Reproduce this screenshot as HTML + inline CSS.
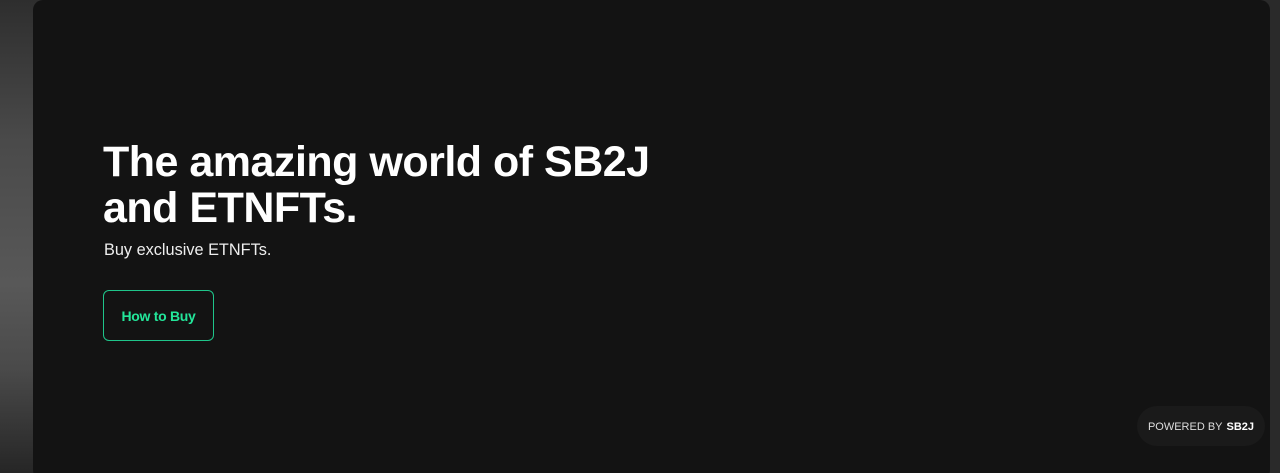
<!DOCTYPE html>
<html><head><style>
html,body{margin:0;padding:0;width:1280px;height:473px;overflow:hidden;font-family:"Liberation Sans",sans-serif}
body{background:linear-gradient(180deg,#2e2e2e 0%,#4a4a4a 30%,#585858 60%,#4a4a4a 78%,#262626 100%);position:relative}
.right{position:absolute;left:1260px;top:0;width:20px;height:473px;background:#2a2a2a}
.card{position:absolute;left:33px;top:0;width:1237px;height:480px;background:#131313;border-radius:10px}
h1{position:absolute;left:70px;top:139px;margin:0;color:#fff;font-size:43px;line-height:46px;font-weight:700;letter-spacing:-0.5px}
p{position:absolute;left:71px;top:241px;margin:0;color:#eee;font-size:16.3px}
.btn{position:absolute;left:70px;top:290px;border:1px solid #1fc58a;border-radius:6px;color:#23e69a;font-weight:700;font-size:14px;display:flex;align-items:center;justify-content:center;box-sizing:border-box;width:111px;height:51px;letter-spacing:-0.3px}
.pw{position:absolute;left:1104px;top:406px;width:128px;height:40px;border-radius:20px;background:#1a1a1a;color:#ddd;font-size:11px;display:flex;align-items:center;justify-content:center;padding-top:1px;box-sizing:border-box}
.pw b{color:#fff;margin-left:4px}
</style></head><body>
<div class="right"></div>
<div class="card">
<h1>The amazing world of SB2J<br>and ETNFTs.</h1>
<p>Buy exclusive ETNFTs.</p>
<div class="btn">How to Buy</div>
<div class="pw">POWERED BY <b>SB2J</b></div>
</div>
</body></html>
